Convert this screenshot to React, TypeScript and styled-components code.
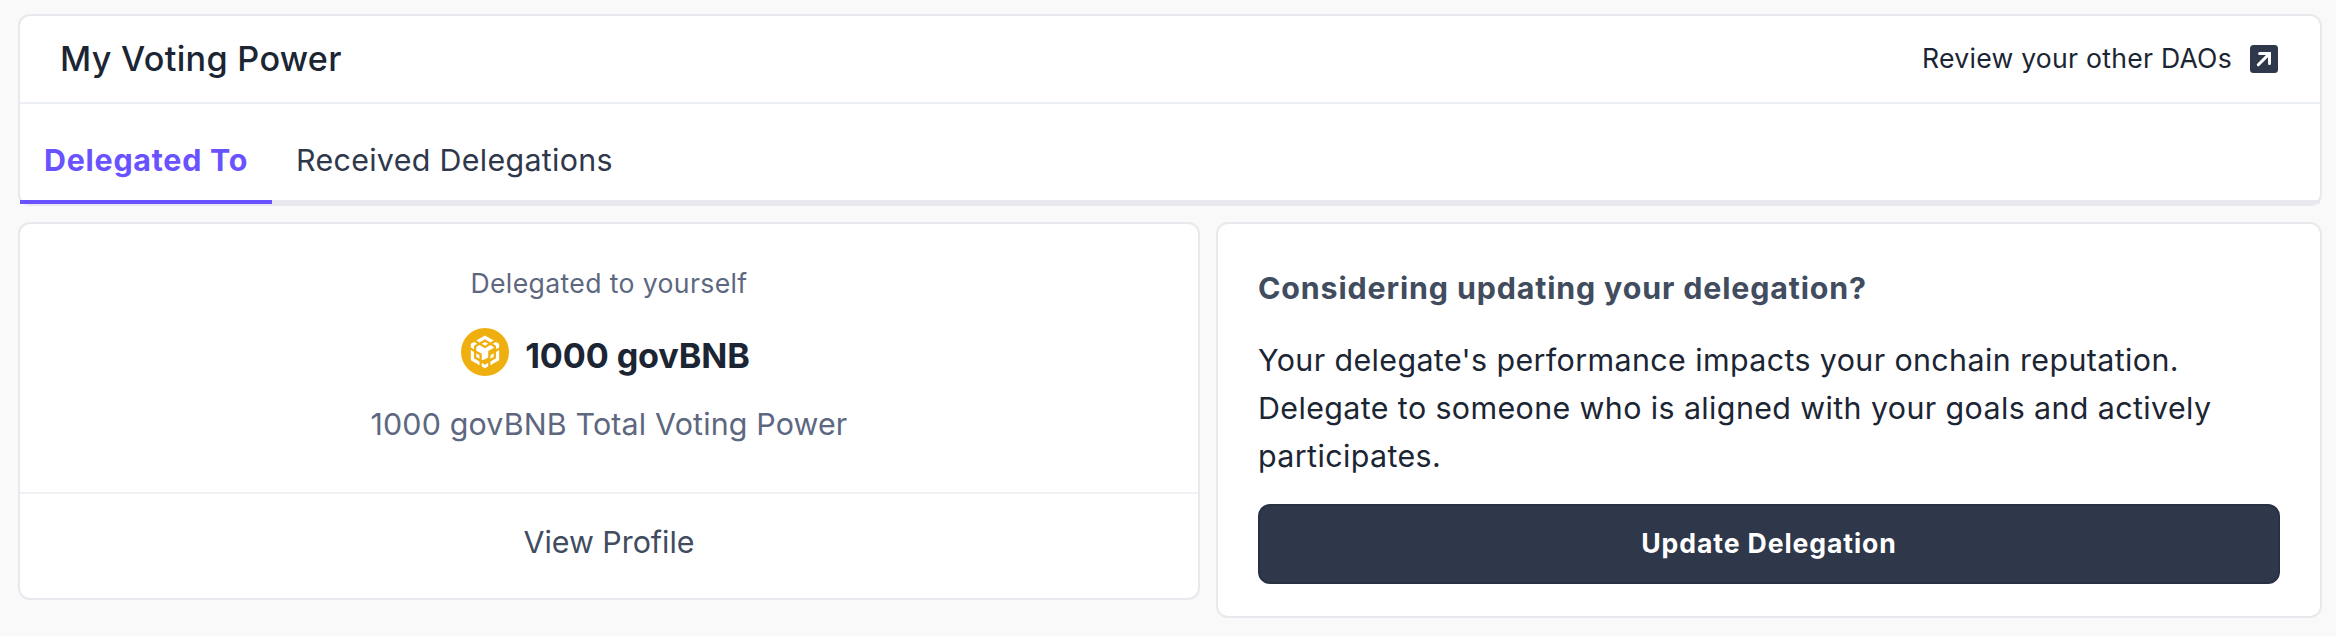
import React from 'react';
import styled, { createGlobalStyle } from 'styled-components';

const GlobalStyle = createGlobalStyle`
  * { box-sizing: border-box; }
  body {
    margin: 0;
    background: #f9f9f9;
    font-family: Inter, "Liberation Sans", sans-serif;
    color: #1b2533;
  }
  h1, h2, p { margin: 0; }
  button { font-family: inherit; cursor: pointer; }
`;

const Page = styled.main`
  display: flex;
  flex-direction: column;
  gap: 16px;
  width: 2336px;
  height: 636px;
  padding: 14px 14px 18px 18px;
`;

const Card = styled.section`
  background: #fff;
  border: 2px solid #e8e8ee;
  border-radius: 12px;
`;

const Header = styled.header`
  display: flex;
  align-items: center;
  justify-content: space-between;
  height: 88px;
  padding: 0 42px 0 40px;
  border-bottom: 2px solid #eceff4;
`;

const Title = styled.h1`
  font-size: 34.2px;
  font-weight: 500;
  line-height: 48px;
  letter-spacing: 0.3px;
`;

const ReviewLink = styled.a`
  display: flex;
  align-items: center;
  gap: 18px;
  font-size: 26.6px;
  line-height: 40px;
  letter-spacing: 0.25px;
  span { padding-bottom: 2px; }
`;

const TabList = styled.nav`
  display: flex;
  height: 100px;
  padding-top: 16px;
  border-bottom: 4px solid #e8e8ee;
`;

const Tab = styled.button<{ $active?: boolean }>`
  height: 84px;
  padding: 0 24px 4px;
  border: 0;
  background: none;
  font-size: 30.4px;
  line-height: 48px;
  text-align: left;
  white-space: nowrap;
  width: ${p => (p.$active ? '252px' : 'auto')};
  font-weight: ${p => (p.$active ? 700 : 400)};
  letter-spacing: ${p => (p.$active ? '0.75px' : '0.32px')};
  color: ${p => (p.$active ? '#6952ff' : '#2f384b')};
  box-shadow: ${p => (p.$active ? 'inset 0 -4px 0 #6952ff' : 'none')};
`;

const Columns = styled.div`
  display: flex;
  align-items: flex-start;
  gap: 16px;
`;

const PowerCard = styled(Card)`
  width: 1182px;
  height: 378px;
  text-align: center;
`;

const PowerSummary = styled.div`
  display: flex;
  flex-direction: column;
  align-items: center;
  height: 270px;
  padding-top: 39px;
  border-bottom: 2px solid #f0f0f5;
`;

const Caption = styled.p`
  font-size: 26.6px;
  line-height: 40px;
  letter-spacing: 0.37px;
  color: #5d6880;
`;

const Balance = styled.div`
  display: flex;
  gap: 16px;
  height: 48px;
  margin: 25px 7px 24px 0;
`;

const Amount = styled.strong`
  padding-top: 4px;
  font-size: 34.2px;
  font-weight: 700;
  line-height: 48px;
  letter-spacing: -0.12px;
`;

const TotalPower = styled.p`
  font-size: 30.4px;
  line-height: 48px;
  letter-spacing: 0.16px;
  color: #5d6880;
`;

const ProfileButton = styled.button`
  width: 100%;
  height: 104px;
  padding: 0 0 8px;
  border: 0;
  background: none;
  font-size: 30.4px;
  letter-spacing: -0.02px;
  color: #414c5f;
`;

const AdviceCard = styled(Card)`
  flex: 1;
  height: 396px;
  padding: 40px;
`;

const AdviceTitle = styled.h2`
  margin-bottom: 24px;
  font-size: 30.4px;
  font-weight: 700;
  line-height: 48px;
  letter-spacing: 0.85px;
  color: #414c5f;
`;

const AdviceText = styled.p`
  font-size: 30.4px;
  line-height: 48px;
  letter-spacing: 0.39px;
`;

const UpdateButton = styled.button`
  width: 100%;
  height: 80px;
  margin-top: 24px;
  padding: 0 0 2px;
  border: 2px solid #283042;
  border-radius: 12px;
  background: #2f374a;
  font-size: 26.6px;
  font-weight: 700;
  letter-spacing: 0.9px;
  color: #fff;
`;

const ExternalIcon = () => (
  <svg width="28" height="28" viewBox="0 0 28 28" fill="none">
    <rect width="28" height="28" rx="3.5" fill="#2f374a" />
    <path d="M8.3 19.8 19 9.1M9.6 8.6h9.9v9.9" stroke="#fff" strokeWidth="3" strokeLinecap="round" strokeLinejoin="miter" />
  </svg>
);

const TokenIcon = () => (
  <svg width="48" height="48" viewBox="0 0 48 48">
    <circle cx="24" cy="24" r="24" fill="#efaf0f" />
    <path
      transform="translate(7.6 7.6) scale(1.365)"
      fill="#fff"
      d="M5.631 3.676 12.001 0l6.367 3.676-2.34 1.358L12 2.716 7.972 5.034l-2.34-1.358Zm12.737 4.636-2.34-1.358L12 9.272l-4.028-2.318-2.34 1.358v2.716l4.026 2.318v4.636L12 17.341l2.341-1.359v-4.636l4.027-2.318V8.312Zm0 7.352v-2.716l-2.34 1.358v2.716l2.34-1.358Zm1.663.96-4.027 2.318v2.717l6.368-3.677V10.63l-2.34 1.358v4.636Zm-2.34-10.63 2.34 1.358v2.716l2.341-1.358V5.994l-2.34-1.358-2.342 1.358ZM9.657 19.926v2.716L12 24l2.341-1.358v-2.716L12 21.284l-2.342-1.358Zm-4.027-4.262 2.341 1.358v-2.716l-2.34-1.358v2.716Zm4.027-9.67L12 7.352l2.342-1.358L12 4.636 9.658 5.994Zm-5.69 1.358 2.342-1.358-2.342-1.358-2.34 1.358v2.716l2.34 1.358V7.352Zm0 4.636-2.34-1.358v7.354l6.367 3.677v-2.717l-4.027-2.319v-4.637Z"
    />
  </svg>
);

export default function App() {
  return (
    <>
      <GlobalStyle />
      <Page>
        <Card>
          <Header>
            <Title>My Voting Power</Title>
            <ReviewLink>
              <span>Review your other DAOs</span>
              <ExternalIcon />
            </ReviewLink>
          </Header>
          <TabList>
            <Tab $active>Delegated To</Tab>
            <Tab>Received Delegations</Tab>
          </TabList>
        </Card>
        <Columns>
          <PowerCard>
            <PowerSummary>
              <Caption>Delegated to yourself</Caption>
              <Balance>
                <TokenIcon />
                <Amount>1000 govBNB</Amount>
              </Balance>
              <TotalPower>1000 govBNB Total Voting Power</TotalPower>
            </PowerSummary>
            <ProfileButton>View Profile</ProfileButton>
          </PowerCard>
          <AdviceCard>
            <AdviceTitle>Considering updating your delegation?</AdviceTitle>
            <AdviceText>
              Your delegate's performance impacts your onchain reputation. Delegate to someone who is aligned with
              your goals and actively participates.
            </AdviceText>
            <UpdateButton>Update Delegation</UpdateButton>
          </AdviceCard>
        </Columns>
      </Page>
    </>
  );
}
